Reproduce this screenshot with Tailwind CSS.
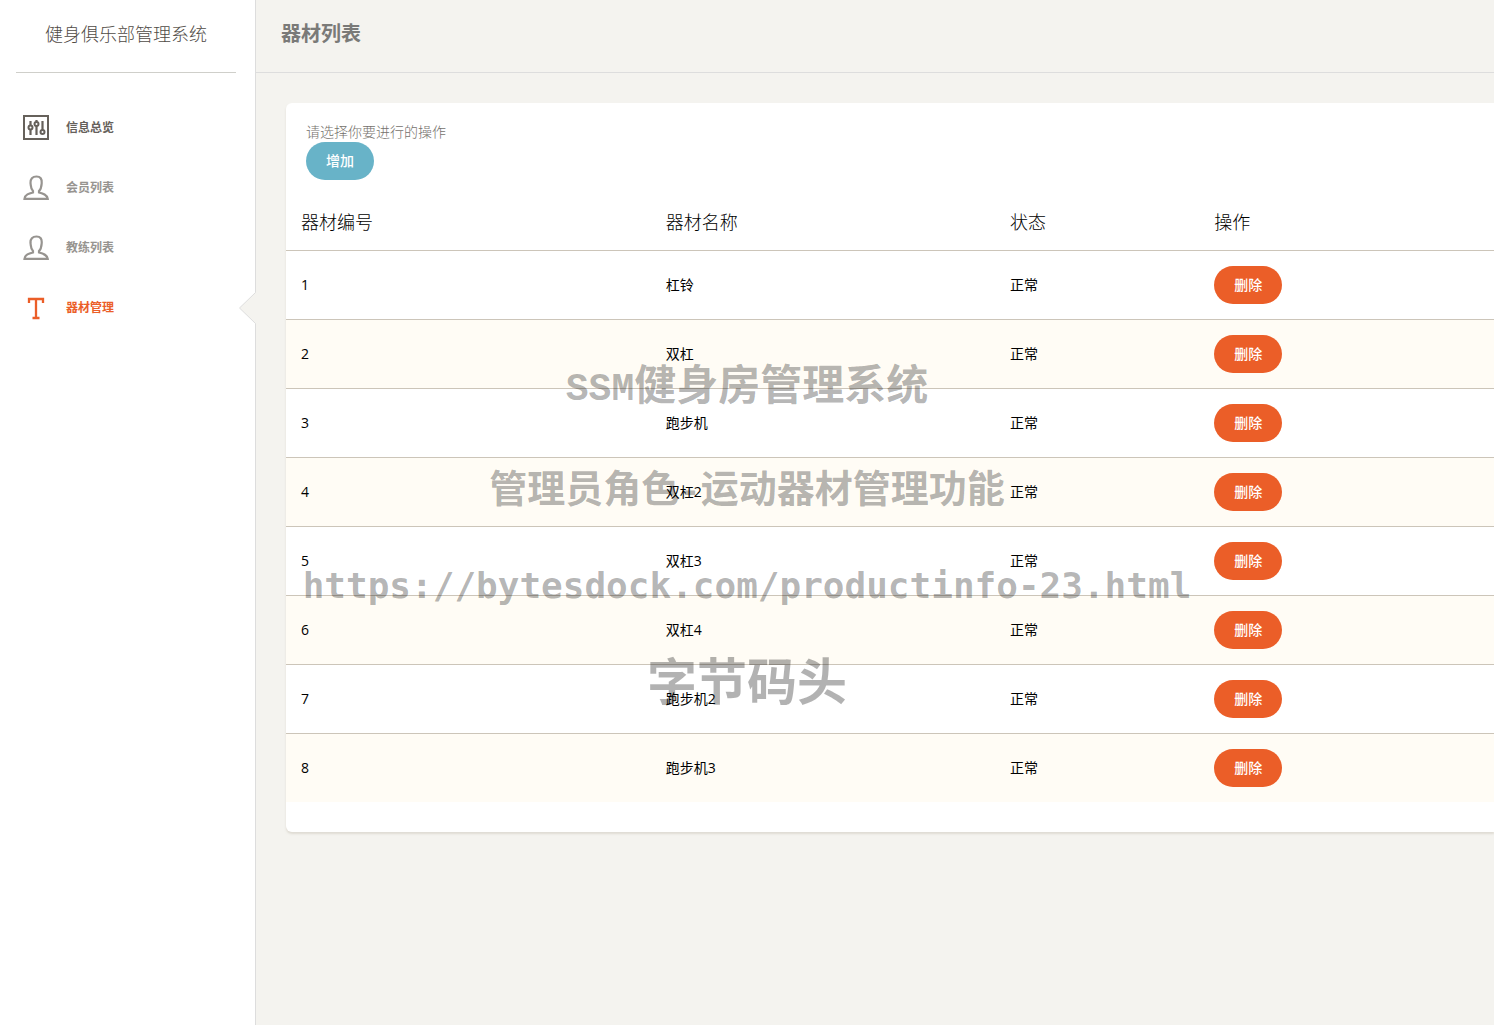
<!DOCTYPE html>
<html lang="zh-CN">
<head>
<meta charset="utf-8">
<title>器材列表</title>
<script src="https://cdn.jsdelivr.net/npm/@tailwindcss/browser@4"></script>
</head>
<body class="relative flex min-h-screen overflow-x-hidden bg-[#f4f3ef] font-['Open_Sans','Noto_Sans_CJK_SC',sans-serif] text-sm text-black">

<aside class="relative w-64 shrink-0 border-r border-[#dddddd] bg-white">
  <div class="mr-[19px] ml-4 flex h-[73px] items-center justify-center border-b border-[#cfcfca] pb-1">
    <a href="#" class="text-lg font-light text-[#504b46]">健身俱乐部管理系统</a>
  </div>
  <nav class="flex flex-col pt-[25px]">
    <a href="#" class="flex h-[60px] items-center gap-4 pl-[22px] text-xs font-bold text-[#66615b]">
      <svg class="size-7" viewBox="0 0 28 28" fill="none" stroke="currentColor" stroke-width="2"><rect x="2" y="2" width="24" height="23"/><path d="M8.500 7v5M8.500 15v6M14.500 6v2M14.500 12v9M20.500 7v9" stroke-width="2.200"/><circle cx="8.500" cy="13.500" r="2"/><circle cx="14.500" cy="10" r="2"/><circle cx="20.500" cy="18" r="2"/></svg>
      信息总览
    </a>
    <a href="#" class="flex h-[60px] items-center gap-4 pl-[22px] text-xs font-bold text-[#979490]">
      <svg class="size-7" viewBox="0 0 28 28" fill="none" stroke="currentColor" stroke-width="2.200"><path d="M11 17C8.500 14.500 9 12 8.500 9 8.200 5 10.500 2.500 14.500 2.500S20 5 19.700 9C19.500 12 19.500 14.500 17 17V18.500C21 19.500 25 20.500 25.700 24.800H2.500C3 20.500 7 19.500 11 18.500Z"/></svg>
      会员列表
    </a>
    <a href="#" class="flex h-[60px] items-center gap-4 pl-[22px] text-xs font-bold text-[#979490]">
      <svg class="size-7" viewBox="0 0 28 28" fill="none" stroke="currentColor" stroke-width="2.200"><path d="M11 17C8.500 14.500 9 12 8.500 9 8.200 5 10.500 2.500 14.500 2.500S20 5 19.700 9C19.500 12 19.500 14.500 17 17V18.500C21 19.500 25 20.500 25.700 24.800H2.500C3 20.500 7 19.500 11 18.500Z"/></svg>
      教练列表
    </a>
    <a href="#" aria-current="page" class="relative flex h-[60px] items-center gap-4 pl-[22px] text-xs font-bold text-[#eb5e28]">
      <svg class="size-7" viewBox="0 0 28 28" fill="none" stroke="currentColor" stroke-width="2.300"><path d="M7 9V5h14v4M14 5v18M10.500 24h7"/></svg>
      器材管理
      <svg class="absolute top-3 -right-px h-9 w-[18px]" viewBox="0 0 18 36" fill="none"><path d="M18 2 1.500 18 18 34Z" fill="#f4f3ef"/><path d="M17.500 2.500 1.500 18 17.500 33.500" stroke="#dddddd"/></svg>
    </a>
  </nav>
</aside>

<main class="min-w-0 flex-1">
  <header class="flex h-[73px] items-center border-b border-[#dddddd] px-[25px] pb-1">
    <h1 class="text-xl font-bold text-[#7a7a78]">器材列表</h1>
  </header>

  <section class="mt-[30px] ml-[30px] rounded-l-md bg-white pb-[30px] shadow-[0_2px_2px_rgba(204,197,185,0.5)]">
    <div class="px-5 pt-5">
      <p class="h-[19px] leading-[18px] font-light text-[#75716c]">请选择你要进行的操作</p>
      <button type="button" class="flex h-[38px] w-[68px] items-center justify-center rounded-full bg-[#68b3c8] font-medium text-white">增加</button>
    </div>
    <table class="mt-[15px] w-full table-fixed border-collapse text-left">
      <colgroup><col class="w-[30.2%]"><col class="w-[28.5%]"><col class="w-[16.9%]"><col></colgroup>
      <thead>
        <tr class="h-[55px] text-lg"><th class="px-[15px] font-light">器材编号</th><th class="px-[15px] font-light">器材名称</th><th class="px-[15px] font-light">状态</th><th class="px-[15px] font-light">操作</th></tr>
      </thead>
      <tbody id="rows"></tbody>
    </table>
  </section>
</main>

<div class="pointer-events-none absolute inset-x-0 top-[352px] flex flex-col items-center font-['Noto_Sans_CJK_SC',sans-serif] font-bold whitespace-nowrap text-black/30">
  <p class="text-[42px] leading-[60px]"><span class="font-['Liberation_Mono',monospace] text-[38px] leading-none">SSM</span>健身房管理系统</p>
  <p class="mt-11 text-[38px] leading-[60px]">管理员角色<span class="font-['Liberation_Mono',monospace] text-4xl leading-none">-</span>运动器材管理功能</p>
  <p class="mt-10 font-['DejaVu_Sans_Mono',monospace] text-4xl leading-[60px]">https://bytesdock.com/productinfo-23.html</p>
  <p class="mt-8 text-[50px] leading-[60px]">字节码头</p>
</div>

<script>
  const names = ['杠铃', '双杠', '跑步机', '双杠2', '双杠3', '双杠4', '跑步机2', '跑步机3'];
  document.getElementById('rows').innerHTML = names.map((name, i) => `
    <tr class="h-[69px] border-t border-[#ccc5b9] even:bg-[#fffcf5]">
      <td class="px-[15px]">${i + 1}</td><td class="px-[15px]">${name}</td><td class="px-[15px]">正常</td>
      <td class="px-[15px]"><button type="button" class="flex h-[38px] w-[68px] items-center justify-center rounded-full bg-[#eb5e28] font-medium text-white">删除</button></td>
    </tr>`).join('');
</script>
</body>
</html>
